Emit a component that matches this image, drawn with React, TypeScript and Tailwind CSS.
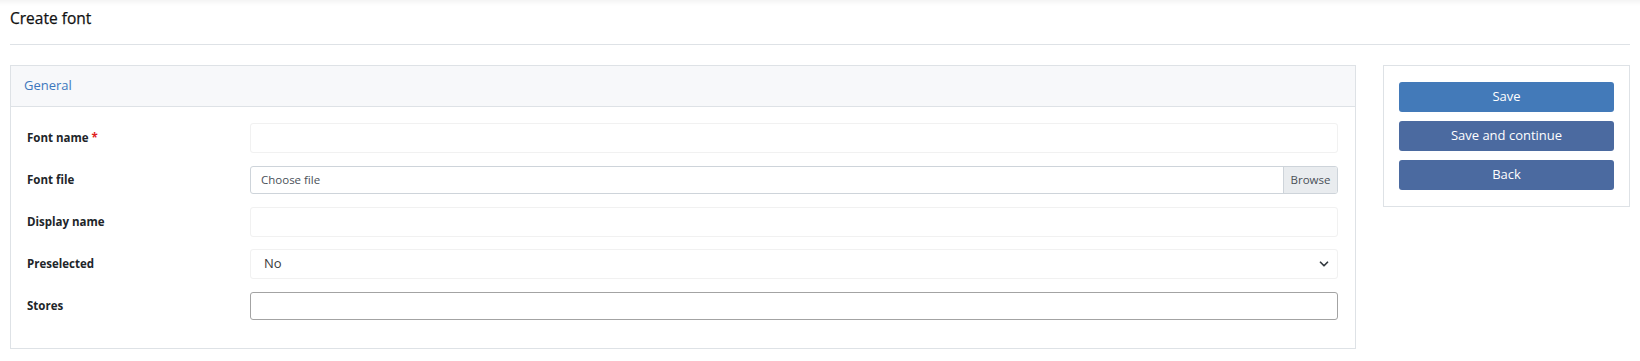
import { ChevronDown } from 'lucide-react';

function Row({ label, required, children }: { label: string; required?: boolean; children: React.ReactNode }) {
  return (
    <div className="flex items-center h-[30px]">
      <div className="w-[223px] shrink-0 text-[11.5px] font-bold text-[#212529]">
        {label}
        {required && <span className="text-[#e02020] ml-[3px]">*</span>}
      </div>
      <div className="flex-1">{children}</div>
    </div>
  );
}

export default function App() {
  return (
    <div className="min-h-screen bg-white font-['Open_Sans','Noto_Sans',sans-serif]">
      <div className="px-[10px] pt-[8px] shadow-[inset_0_6px_5px_-4px_rgba(0,0,0,0.06)]">
        <h1 className="text-[15.5px] leading-[20px] text-[#111] [-webkit-text-stroke:0.25px_#111]">Create font</h1>
        <div className="mt-[16px] border-t border-[#dee2e6]" />
      </div>

      <div className="flex gap-[27px] px-[10px] pt-[20px]">
        <div className="flex-1 border border-[#dee2e6]">
          <div className="h-[41px] bg-[#f7f8fa] border-b border-[#dee2e6] flex items-center px-[13px]">
            <span className="text-[13px] text-[#3d77bd]">General</span>
          </div>
          <div className="pl-[16px] pr-[17px] pt-[16px] pb-[27px] flex flex-col gap-[12px]">
            <Row label="Font name" required>
              <input className="w-full h-[30px] rounded-[3px] border border-[#f1f1f1] outline-none px-3 text-[13px]" />
            </Row>
            <Row label="Font file">
              <div className="flex h-[28px] rounded-[3px] border border-[#ced4da] overflow-hidden">
                <div className="flex-1 flex items-center px-[10px] text-[11.5px] text-[#495057]">Choose file</div>
                <div className="w-[54px] bg-[#e9ecef] border-l border-[#ced4da] flex items-center justify-center text-[11.5px] text-[#495057]">
                  Browse
                </div>
              </div>
            </Row>
            <Row label="Display name">
              <input className="w-full h-[30px] rounded-[3px] border border-[#f1f1f1] outline-none px-3 text-[13px]" />
            </Row>
            <Row label="Preselected">
              <div className="flex items-center justify-between h-[30px] rounded-[3px] border border-[#f1f1f1] pl-[13px] pr-[6px]">
                <span className="text-[13px] text-[#3a3a3a]">No</span>
                <ChevronDown className="w-[14px] h-[14px] text-[#343a40]" strokeWidth={3} />
              </div>
            </Row>
            <Row label="Stores">
              <div className="h-[28px] rounded-[3px] border border-[#a3a3a3]" />
            </Row>
          </div>
        </div>

        <div className="w-[247px] self-start border border-[#dee2e6] px-[15px] py-[16px] flex flex-col gap-[9px]">
          <button className="h-[30px] rounded-[3px] bg-[#437ab9] text-white text-[13px]">Save</button>
          <button className="h-[30px] rounded-[3px] bg-[#4b6aa0] text-white text-[13px]">Save and continue</button>
          <button className="h-[30px] rounded-[3px] bg-[#4b6aa0] text-white text-[13px]">Back</button>
        </div>
      </div>
    </div>
  );
}
